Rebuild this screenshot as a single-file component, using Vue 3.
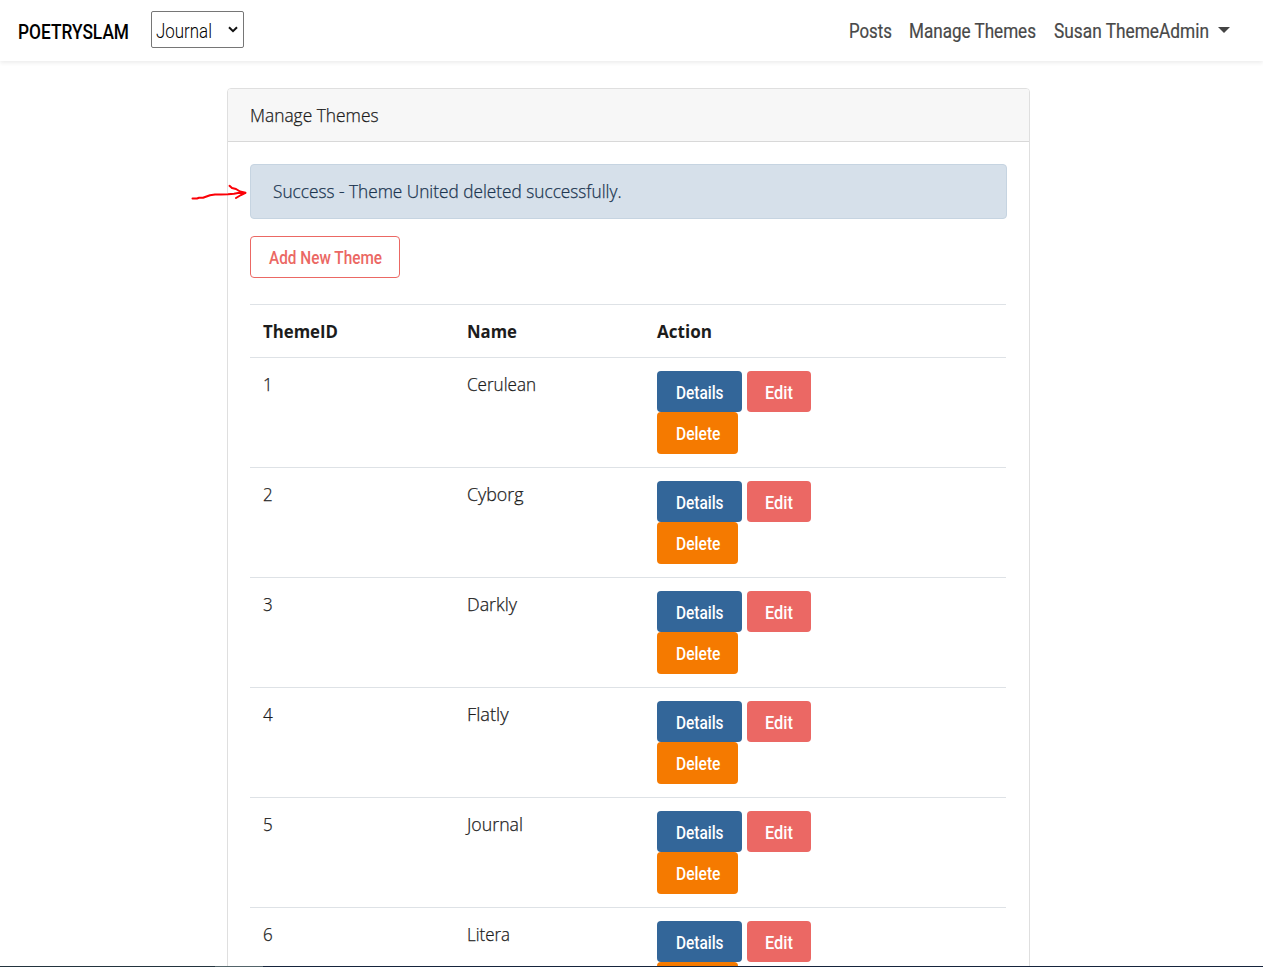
<script setup>
import { h } from 'vue'

// One line of text fitted to a fixed advance width.
const FitText = (props) =>
  h('svg', { width: props.w, height: 24, style: { display: 'block', overflow: 'visible' } }, [
    h('text', { x: 0, y: 18, textLength: props.w, lengthAdjust: 'spacingAndGlyphs', fill: 'currentColor' }, props.t),
  ])
FitText.props = ['t', 'w']

const links = [
  { t: 'Posts', w: 43 },
  { t: 'Manage Themes', w: 127 },
  { t: 'Susan ThemeAdmin', w: 155 },
]
const themes = [
  { id: '1', name: 'Cerulean', w: 69 },
  { id: '2', name: 'Cyborg', w: 56.5 },
  { id: '3', name: 'Darkly', w: 50 },
  { id: '4', name: 'Flatly', w: 41.5 },
  { id: '5', name: 'Journal', w: 56 },
  { id: '6', name: 'Litera', w: 43 },
]
</script>

<template>
  <div class="page">
    <nav class="navbar">
      <FitText class="brand" t="POETRYSLAM" :w="111" />
      <div class="select">
        <FitText class="select-value" t="Journal" :w="56" />
        <svg class="chevron" width="10" height="7" viewBox="0 0 10 7"><path d="M1 1.2 5 5.2 9 1.2" fill="none" stroke="#111" stroke-width="2" /></svg>
      </div>
      <div class="links">
        <FitText v-for="l in links" :key="l.t" class="link" :t="l.t" :w="l.w" />
      </div>
      <i class="caret"></i>
    </nav>

    <main class="card">
      <header class="card-header"><FitText class="copy" t="Manage Themes" :w="128.5" /></header>
      <section class="card-body">
        <div class="alert"><FitText class="copy" t="Success - Theme United deleted successfully." :w="348.5" /></div>
        <button class="btn outline"><FitText t="Add New Theme" :w="113" /></button>
        <div class="table">
          <div class="row head">
            <FitText t="ThemeID" :w="75" />
            <FitText t="Name" :w="50" />
            <FitText t="Action" :w="55" />
          </div>
          <div v-for="t in themes" :key="t.id" class="row">
            <FitText class="copy" :t="t.id" :w="9.7" />
            <FitText class="copy" :t="t.name" :w="t.w" />
            <div class="actions">
              <button class="btn details"><FitText t="Details" :w="47.5" /></button>
              <button class="btn edit"><FitText t="Edit" :w="28" /></button>
              <button class="btn delete"><FitText v-if="t.id !== '6'" t="Delete" :w="44.5" /></button>
            </div>
          </div>
        </div>
      </section>
    </main>

    <svg class="arrow" width="60" height="24" viewBox="0 0 60 24" fill="none" stroke="#fb0007" stroke-width="2" stroke-linecap="round" stroke-linejoin="round">
      <path d="M2.5 15.5H7L9 14.8H13L20 12.3L25 11.5H31L38 11.3L44 10.7L48 10H55" />
      <path d="M39.5 2.8 42 5 46 6 50 8.5 55.5 9.8 51 12 46 15" />
    </svg>
    <div class="bottom-edge"></div>
  </div>
</template>

<style>
body { margin: 0; overflow: hidden; }
</style>

<style scoped>
.page { position: relative; box-sizing: border-box; height: 967px; overflow: hidden; background: #fff; color: #1c1c1c; font: 300 17.7px "Open Sans", "Noto Sans", sans-serif; }
.copy { stroke: currentColor; stroke-width: .25px; }
.navbar { box-sizing: border-box; height: 61px; display: flex; align-items: flex-start; padding: 11px 33px 0 18px; box-shadow: 0 2px 4px rgba(0, 0, 0, .075); font-family: Roboto, sans-serif; font-weight: 400; font-size: 20px; }
.brand { color: #000; font-weight: 500; font-size: 20.5px; margin-top: 10px; }
.select { box-sizing: border-box; width: 93px; height: 37px; margin-left: 22px; border: 1px solid #767676; border-radius: 2px; display: flex; justify-content: space-between; padding: 8px 5px 0 4px; color: #000; }
.select-value { font-weight: 300; }
.chevron { margin-top: 6px; }
.links { display: flex; gap: 17.5px; margin: 9px 9.5px 0 auto; color: #484848; stroke: currentColor; stroke-width: .2px; }
.caret { margin-top: 16px; border: 6px solid transparent; border-top-color: #444; border-bottom: 0; }
.card { box-sizing: border-box; width: 803px; height: 900px; margin: 27px 0 0 227px; border: 1px solid #dfdfdf; border-radius: 4px; }
.card-header { box-sizing: border-box; height: 53px; padding: 15px 22px; background: #f7f7f7; border-bottom: 1px solid #d8d8d8; border-radius: 3px 3px 0 0; }
.card-body { padding: 22px; }
.alert { box-sizing: border-box; height: 55px; padding: 15px 22px; margin-bottom: 17px; border: 1px solid #c6d4e1; border-radius: 4px; background: #d6e0ea; color: #1b3550; }
.btn { display: block; box-sizing: border-box; height: 41px; margin: 0; padding: 3px 17.5px 0; border: 1px solid transparent; border-radius: 4px; color: #fff; font: 500 18px Roboto, sans-serif; }
.outline { height: 42px; padding: 1.5px 17.5px 0; color: #eb6864; border-color: #eb6864; background: #fff; }
.table { margin-top: 26px; width: 756px; }
.row { box-sizing: border-box; height: 110px; display: grid; grid-template-columns: 204px 190px 1fr; padding: 15px 0 0 13px; border-top: 1px solid #dee2e6; }
.head { height: 53px; font-weight: 700; }
.actions { width: 160px; display: flex; flex-wrap: wrap; gap: 0 5px; align-content: flex-start; margin: -2px 0 0; }
.details { background: #369; width: 85px; }
.edit { background: #eb6864; width: 64px; padding-left: 17px; }
.delete { background: #f57a00; width: 81px; height: 42px; padding-top: 1.5px; }
.arrow { position: absolute; left: 190px; top: 183px; }
.bottom-edge { position: absolute; left: 0; right: 0; bottom: 0; height: 1px; background: linear-gradient(90deg, #23343e 0 215px, #53646a 215px 263px, #16243c 263px); }
</style>
